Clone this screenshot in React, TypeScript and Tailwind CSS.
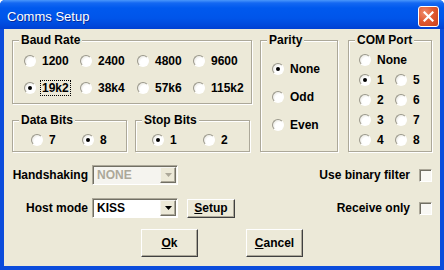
import type { ReactNode } from 'react';

function Radio({
  label,
  checked = false,
  focus = false,
}: {
  label: string;
  checked?: boolean;
  focus?: boolean;
}) {
  return (
    <label className="flex h-[14px] items-center gap-[4px]">
      <span className="flex h-[12px] w-[12px] shrink-0 items-center justify-center rounded-full border border-t-[#9a988c] border-l-[#9a988c] border-b-white border-r-white bg-[radial-gradient(circle_at_65%_65%,#ffffff_45%,#d9d7cc_100%)]">
        {checked && <span className="h-[4px] w-[4px] rounded-full bg-black" />}
      </span>
      <span
        className={
          focus
            ? 'border border-dotted border-black px-[1px] leading-[14px]'
            : 'border border-transparent px-[1px] leading-[14px]'
        }
      >
        {label}
      </span>
    </label>
  );
}

function Group({
  title,
  className,
  children,
}: {
  title: string;
  className: string;
  children: ReactNode;
}) {
  return (
    <fieldset
      className={`border border-[#aca899] shadow-[inset_1px_1px_0_#fff,1px_1px_0_#fff] ${className}`}
    >
      <legend className="relative ml-[6px] bg-[#ece9d8] px-[2px] leading-[14px]">
        {title}
      </legend>
      {children}
    </fieldset>
  );
}

function Arrow({ color }: { color: string }) {
  return (
    <svg width="7" height="4" viewBox="0 0 7 4">
      <path d="M0 0h7L3.5 4z" fill={color} />
    </svg>
  );
}

function Combo({ value, disabled = false }: { value: string; disabled?: boolean }) {
  return (
    <div
      className={`flex h-[20px] w-[86px] border border-t-[#aca899] border-l-[#aca899] border-b-white border-r-white p-[1px] shadow-[inset_1px_1px_0_#716f64] ${
        disabled ? 'bg-[#f5f4ef]' : 'bg-white'
      }`}
    >
      <span
        className={`flex flex-1 items-center pl-[3px] ${
          disabled ? 'text-[#aca899]' : 'text-black'
        }`}
      >
        {value}
      </span>
      <span className="flex w-[16px] items-center justify-center border border-t-[#f4f3ee] border-l-[#f4f3ee] border-b-[#716f64] border-r-[#716f64] bg-[#ece9d8] shadow-[inset_-1px_-1px_0_#aca899]">
        <Arrow color={disabled ? '#aca899' : '#000'} />
      </span>
    </div>
  );
}

function Check() {
  return (
    <span className="h-[13px] w-[13px] border border-t-[#aca899] border-l-[#aca899] border-b-white border-r-white bg-[#f9f8f4] shadow-[inset_1px_1px_0_#716f64]" />
  );
}

function Btn({ children, className }: { children: ReactNode; className: string }) {
  return (
    <button
      type="button"
      className={`flex items-center justify-center border border-t-white border-l-white border-b-[#404040] border-r-[#404040] bg-[#ece9d8] font-bold shadow-[inset_-1px_-1px_0_#aca899] ${className}`}
    >
      {children}
    </button>
  );
}

export default function App() {
  return (
    <div className="flex h-[270px] w-[444px] flex-col overflow-hidden rounded-t-[5px] bg-[#0b4cdc] font-['Liberation_Sans',Arial,sans-serif] text-[12px] font-bold text-black">
      <div className="flex h-[29px] shrink-0 items-center justify-between bg-[linear-gradient(to_bottom,#4a97fb_0px,#1468f2_3px,#0059ee_8px,#0055ea_18px,#0049dc_25px,#0040d2_29px)] pl-[7px] pr-[5px] pt-[4px]">
        <span className="text-[13px] font-normal text-white [text-shadow:1px_1px_0_#0a2a9a]">
          Comms Setup
        </span>
        <button
          type="button"
          aria-label="Close"
          className="flex h-[21px] w-[21px] items-center justify-center rounded-[3px] border border-white bg-[radial-gradient(circle_at_30%_30%,#f08c6c_0%,#e05a32_45%,#c9401c_100%)]"
        >
          <svg width="11" height="11" viewBox="0 0 11 11">
            <path d="M1.5 1.5l8 8M9.5 1.5l-8 8" stroke="#fff" strokeWidth="2.2" strokeLinecap="square" />
          </svg>
        </button>
      </div>

      <div className="mx-[4px] mb-[4px] flex flex-1 flex-col bg-[#ece9d8] pl-[8px] pr-[8px] pt-[4px]">
        <div className="flex items-start">
          <div className="flex w-[240px] flex-col">
            <Group title="Baud Rate" className="h-[71px] w-[240px]">
              <div className="flex flex-col gap-[13px] pl-[11px] pt-[7px]">
                <div className="flex">
                  <div className="w-[56px]"><Radio label="1200" /></div>
                  <div className="w-[57px]"><Radio label="2400" /></div>
                  <div className="w-[56px]"><Radio label="4800" /></div>
                  <div><Radio label="9600" /></div>
                </div>
                <div className="flex">
                  <div className="w-[56px]"><Radio label="19k2" checked focus /></div>
                  <div className="w-[57px]"><Radio label="38k4" /></div>
                  <div className="w-[56px]"><Radio label="57k6" /></div>
                  <div><Radio label="115k2" /></div>
                </div>
              </div>
            </Group>
            <div className="mt-[9px] flex gap-[8px]">
              <Group title="Data Bits" className="h-[39px] w-[115px]">
                <div className="flex pl-[18px] pt-[6px]">
                  <div className="w-[51px]"><Radio label="7" /></div>
                  <Radio label="8" checked />
                </div>
              </Group>
              <Group title="Stop Bits" className="h-[39px] w-[115px]">
                <div className="flex pl-[16px] pt-[6px]">
                  <div className="w-[51px]"><Radio label="1" checked /></div>
                  <Radio label="2" />
                </div>
              </Group>
            </div>
          </div>

          <Group title="Parity" className="ml-[8px] h-[119px] w-[78px]">
            <div className="flex flex-col gap-[14px] pl-[11px] pt-[15px]">
              <Radio label="None" checked />
              <Radio label="Odd" />
              <Radio label="Even" />
            </div>
          </Group>

          <Group title="COM Port" className="ml-[10px] h-[119px] w-[84px]">
            <div className="flex flex-col gap-[6px] pl-[10px] pt-[6px]">
              <Radio label="None" />
              {[
                ['1', '5'],
                ['2', '6'],
                ['3', '7'],
                ['4', '8'],
              ].map(([a, b]) => (
                <div key={a} className="flex">
                  <div className="w-[36px]"><Radio label={a} checked={a === '1'} /></div>
                  <Radio label={b} />
                </div>
              ))}
            </div>
          </Group>
        </div>

        <div className="mt-[13px] flex h-[20px] items-center justify-between">
          <div className="flex items-center gap-[4px]">
            <span className="w-[76px] whitespace-nowrap text-right">Handshaking</span>
            <Combo value="NONE" disabled />
          </div>
          <div className="flex items-center gap-[9px]">
            <span>Use binary filter</span>
            <Check />
          </div>
        </div>

        <div className="mt-[13px] flex h-[20px] items-center justify-between">
          <div className="flex items-center gap-[4px]">
            <span className="w-[76px] whitespace-nowrap text-right">Host mode</span>
            <Combo value="KISS" />
            <Btn className="ml-[5px] h-[19px] w-[48px]">
              <span><u>S</u>etup</span>
            </Btn>
          </div>
          <div className="flex items-center gap-[9px]">
            <span>Receive only</span>
            <Check />
          </div>
        </div>

        <div className="mt-[11px] flex justify-center gap-[48px]">
          <Btn className="h-[28px] w-[57px]">
            <span><u>O</u>k</span>
          </Btn>
          <Btn className="h-[28px] w-[57px]">
            <span><u>C</u>ancel</span>
          </Btn>
        </div>
      </div>
    </div>
  );
}
